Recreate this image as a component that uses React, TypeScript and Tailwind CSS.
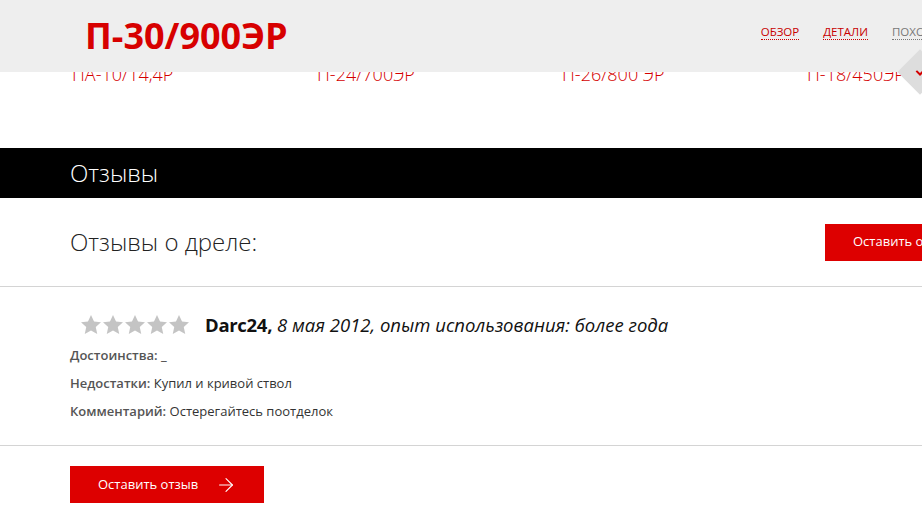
import { ArrowRight } from "lucide-react";

const products = ["ПА-10/14,4Р", "П-24/700ЭР", "П-26/800 ЭР", "П-18/450ЭР"];

function Star() {
  return (
    <svg viewBox="0 0 24 24" className="h-[22px] w-[22px] text-[#c4c4c4]" fill="currentColor" aria-hidden="true">
      <path d="M12 1.2l3.3 7 7.6.8-5.7 5.1 1.6 7.6L12 17.9l-6.8 3.8 1.6-7.6L1.1 9l7.6-.8z" />
    </svg>
  );
}

export default function App() {
  return (
    <div className="relative h-[516px] w-[922px] overflow-hidden bg-white font-['Open_Sans',sans-serif]">
      <div className="w-[1100px]">
        {/* header over the page */}
        <header className="absolute left-0 top-0 z-10 flex h-[72px] w-[1100px] items-center bg-[#eeeeee] pl-[85px]">
          <h1 className="shrink-0 text-[36px] font-bold leading-none text-[#d70000]">П-30/900ЭР</h1>
          <nav className="ml-[473px] mb-[8px] flex gap-[24px] text-[11.5px] uppercase">
            <a className="border-b border-dotted border-[#c00] leading-[15px] text-[#c80000]">Обзор</a>
            <a className="border-b border-dotted border-[#c00] leading-[15px] text-[#c80000]">Детали</a>
            <a className="border-b border-dotted border-[#777] leading-[15px] text-[#777]">Похожие</a>
          </nav>
        </header>

        {/* related products, mostly under the header */}
        <div className="relative h-[148px] pt-[60px]">
          <div className="flex pl-[72px] text-[18px] font-light leading-[28px] text-[#d40000]">
            {products.map((p) => (
              <span key={p} className="w-[245px] shrink-0">
                {p}
              </span>
            ))}
          </div>
          <div className="absolute left-[904px] top-[56px] z-20 flex h-[32px] w-[32px] rotate-45 items-center justify-center bg-[#dddddd]">
            <svg viewBox="0 0 12 12" className="h-[11px] w-[11px] -rotate-45 text-[#d40000]" fill="none" stroke="currentColor" strokeWidth="2.2">
              <path d="M2 4l4 4 4-4" />
            </svg>
          </div>
        </div>

        <div className="flex h-[50px] items-center bg-black pl-[70px] text-[24px] font-light text-white">Отзывы</div>

        <div className="flex h-[89px] items-center border-b border-[#d4d4d4] pl-[70px]">
          <h2 className="w-[755px] shrink-0 whitespace-nowrap text-[24px] font-light text-[#222]">Отзывы о дреле:</h2>
          <button className="h-[37px] w-[180px] shrink-0 whitespace-nowrap bg-[#dd0000] pl-[28px] text-left text-[13px] text-white">
            Оставить отзыв
          </button>
        </div>

        <div className="h-[159px] border-b border-[#d4d4d4] pl-[70px] pt-[24px]">
          <div className="flex items-center">
            <div className="ml-[10px] flex">
              <Star />
              <Star />
              <Star />
              <Star />
              <Star />
            </div>
            <p className="ml-[15px] text-[18.5px] text-[#111]">
              <span className="font-bold tracking-[-0.3px]">Darc24,</span>{" "}
              <i className="font-normal">8 мая 2012, опыт использования: более года</i>
            </p>
          </div>
          <div className="mt-[7px] flex flex-col gap-[10px] text-[13px] leading-[18px] text-[#333]">
            <p>
              <b className="font-semibold text-[#555]">Достоинства:</b> _
            </p>
            <p>
              <b className="font-semibold text-[#555]">Недостатки:</b> Купил и кривой ствол
            </p>
            <p>
              <b className="font-semibold text-[#555]">Комментарий:</b> Остерегайтесь поотделок
            </p>
          </div>
        </div>

        <div className="pl-[70px] pt-[20px]">
          <button className="flex h-[37px] w-[194px] items-center bg-[#dd0000] pl-[28px] text-[13px] text-white">
            Оставить отзыв
            <ArrowRight className="ml-[17px] h-[22px] w-[22px]" strokeWidth={1.2} />
          </button>
        </div>
      </div>
    </div>
  );
}
